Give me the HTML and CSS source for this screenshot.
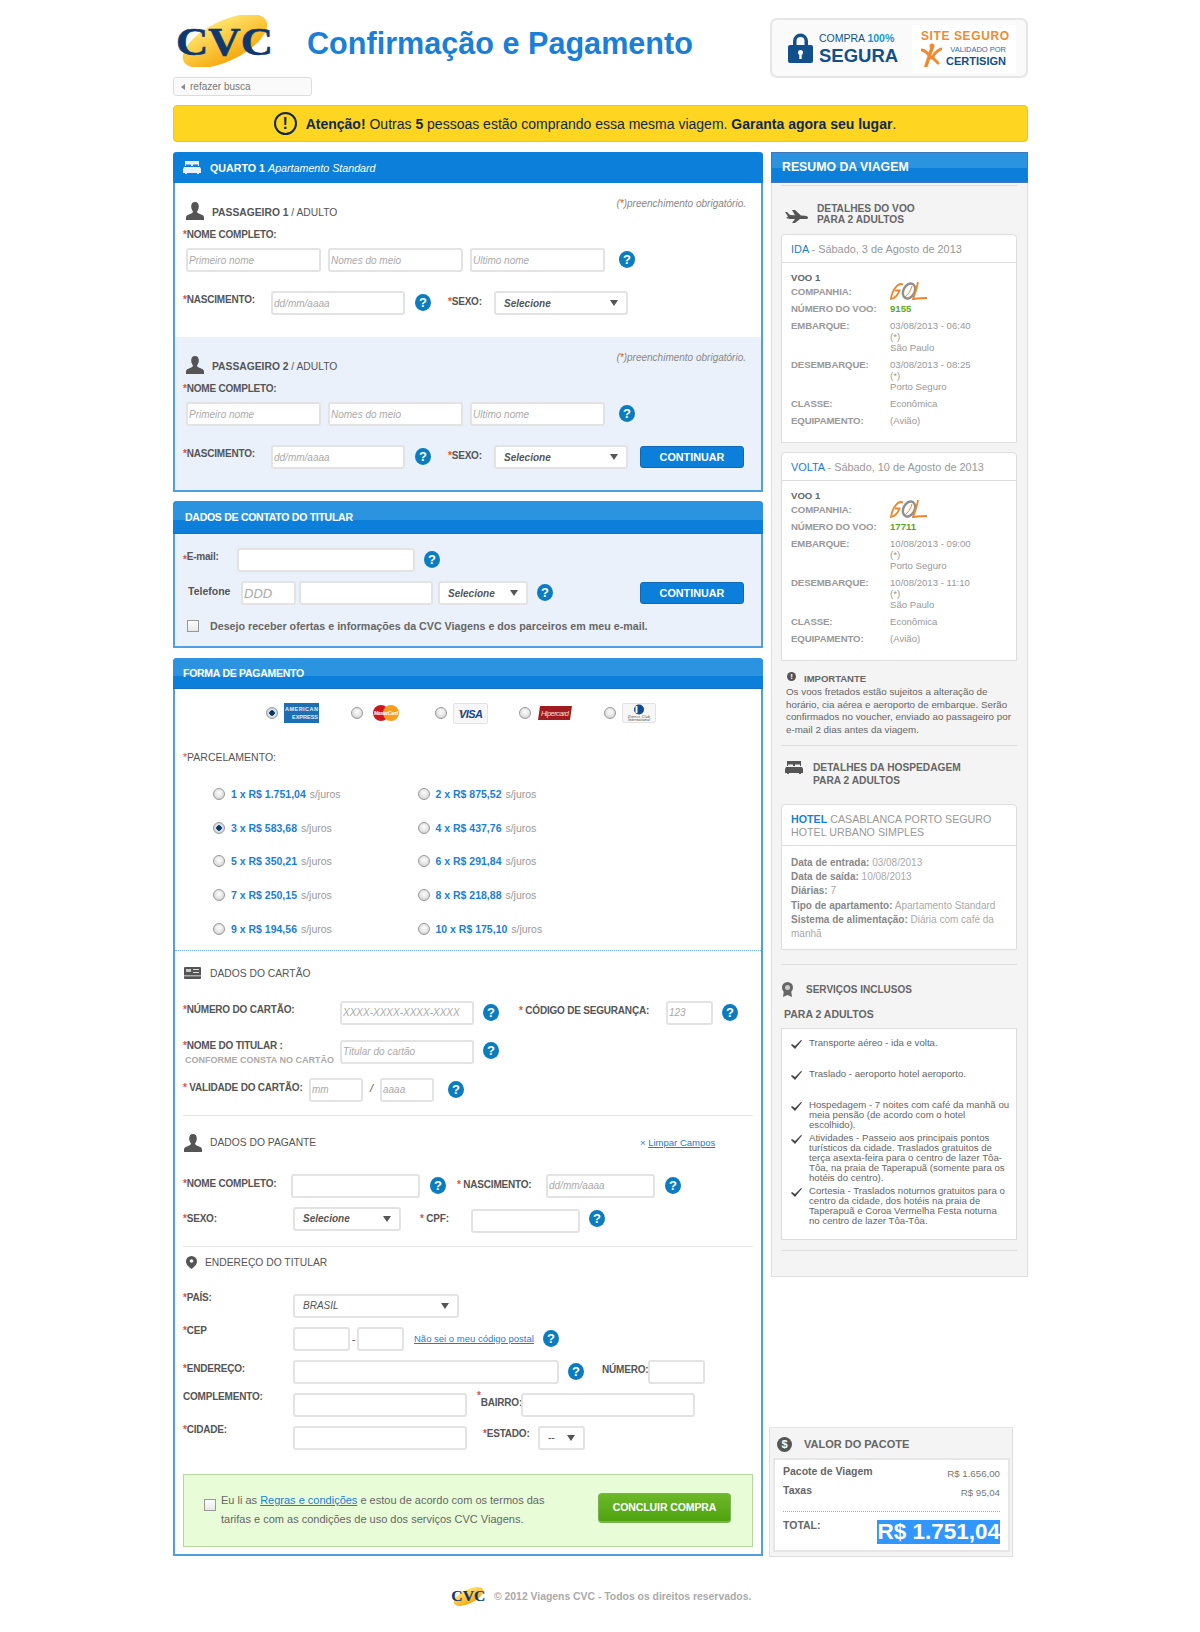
FILE: index.html
```html
<!DOCTYPE html>
<html lang="pt-BR">
<head>
    <meta charset="UTF-8">
    <title>Confirmação e Pagamento</title>
    <link rel="stylesheet" href="styles.css">
</head>
<body>
<svg class="defs" width="0" height="0">
    <defs>
        <linearGradient id="gold" x1="0" y1="0" x2="0" y2="1">
            <stop offset="0" stop-color="#ffe26a"/>
            <stop offset="1" stop-color="#f6ab12"/>
        </linearGradient>
        <symbol id="logo" viewBox="0 0 100 52">
            <ellipse cx="50" cy="26" rx="46" ry="20" transform="rotate(-26 50 26)" fill="url(#gold)"/>
            <text class="logo-text" x="1" y="40" font-size="41" textLength="97" lengthAdjust="spacingAndGlyphs">CVC</text>
        </symbol>
        <symbol id="person" viewBox="0 0 18 18">
            <path d="M9 0c2.700 0 3.800 2 3.800 4.500 0 2-.8 3.800-1.800 5 .1 1.300 1.200 1.800 3 2.600 2.200.9 4 1.600 4 3.400V18H0v-2.500c0-1.800 1.800-2.500 4-3.400 1.800-.8 2.900-1.300 3-2.600-1-1.200-1.800-3-1.800-5C5.200 2 6.300 0 9 0z"/>
        </symbol>
        <symbol id="bed" viewBox="0 0 18 13">
            <path d="M2 0h14v5h-1V3.500H10V5H8V3.500H3V5H2zM1 6h16l1 2v4h-2v1h-2v-1H4v1H2v-1H0V8z"/>
        </symbol>
        <symbol id="gol" viewBox="0 0 37 19">
            <path d="M13 2.500C8 0 2 8 1 17c4-1 7-4 8.500-8.500H5" fill="none" stroke="#f08428" stroke-width="1.800"/>
            <ellipse cx="19" cy="9" rx="5.500" ry="8" transform="rotate(28 19 9)" fill="none" stroke="#8f8f8f" stroke-width="2.400"/>
            <path d="M15 15c3-2 6-7 7-11" fill="none" stroke="#f08428" stroke-width="1"/>
            <path d="M28 0c-1 6-3 12-5 17 5-.5 10-1 14-1" fill="none" stroke="#f08428" stroke-width="1.800"/>
        </symbol>
    </defs>
</svg>

<div class="page">
    <header class="top">
        <div class="top-row">
            <svg class="logo"><use href="#logo"/></svg>
            <h1 class="title">Confirmação e Pagamento</h1>
            <div class="seal">
                <svg class="lock" viewBox="0 0 25 30">
                    <path d="M5 13V8a7.500 7.500 0 0 1 15 0v5h-3.500V8a4 4 0 0 0-8 0v5z" fill="#12508c"/>
                    <rect y="12" width="25" height="18" rx="2" fill="#12508c"/>
                    <circle cx="12.500" cy="19.500" r="2.500" fill="#fff"/>
                    <rect x="11.300" y="20" width="2.400" height="6" fill="#fff"/>
                </svg>
                <div class="seal-buy">
                    <div class="seal-small">COMPRA <b>100%</b></div>
                    <div class="seal-big">SEGURA</div>
                </div>
                <div class="seal-cert">
                    <div class="cert-top">SITE SEGURO</div>
                    <div class="cert-row">
                        <svg class="cert-star" viewBox="0 0 21 24" fill="none" stroke="#f08a32" stroke-linecap="round">
                            <circle cx="11" cy="3" r="2.500" fill="#f08a32" stroke="none"/>
                            <path d="M11 5L5 23" stroke-width="3.500"/>
                            <path d="M1 7c5 1 7 5 9 8" stroke-width="3"/>
                            <path d="M20 6c-4 2-7 5-8 8" stroke-width="3"/>
                            <path d="M11 14l6 6" stroke-width="3"/>
                        </svg>
                        <div class="cert-text">
                            <div class="cert-val">VALIDADO POR</div>
                            <div class="cert-name">CERTISIGN</div>
                        </div>
                    </div>
                </div>
            </div>
        </div>
        <a class="back"><span class="back-arrow"></span>refazer busca</a>
    </header>

    <div class="alert">
        <span class="alert-icon">!</span>
        <span><b>Atenção!</b> Outras <b>5</b> pessoas estão comprando essa mesma viagem. <b>Garanta agora seu lugar</b>.</span>
    </div>

    <div class="cols">
        <main class="main">
            <!-- quarto -->
            <section class="panel">
                <div class="panel-head flat">
                    <svg class="head-bed"><use href="#bed"/></svg>
                    <span><b>QUARTO 1</b> <em>Apartamento Standard</em></span>
                </div>

                <div class="pax">
                    <div class="pax-head">
                        <svg class="person"><use href="#person"/></svg>
                        <span class="sub-title"><b>PASSAGEIRO 1</b> / ADULTO</span>
                        <span class="req">(<span class="star">*</span>)preenchimento obrigatório.</span>
                    </div>
                    <div class="lbl lbl-name"><span class="star">*</span>NOME COMPLETO:</div>
                    <div class="row names">
                        <input class="in w135" placeholder="Primeiro nome">
                        <input class="in w135 ml7" placeholder="Nomes do meio">
                        <input class="in w135 ml7" placeholder="Último nome">
                        <span class="help ml14">?</span>
                    </div>
                    <div class="row birth">
                        <div class="lbl w88 mt2"><span class="star">*</span>NASCIMENTO:</div>
                        <input class="in w134" placeholder="dd/mm/aaaa">
                        <span class="help ml10">?</span>
                        <div class="lbl w46 ml17 mt4"><span class="star">*</span>SEXO:</div>
                        <div class="sel w134"><span>Selecione</span></div>
                    </div>
                </div>

                <div class="pax pax-alt">
                    <div class="pax-head">
                        <svg class="person"><use href="#person"/></svg>
                        <span class="sub-title"><b>PASSAGEIRO 2</b> / ADULTO</span>
                        <span class="req">(<span class="star">*</span>)preenchimento obrigatório.</span>
                    </div>
                    <div class="lbl lbl-name"><span class="star">*</span>NOME COMPLETO:</div>
                    <div class="row names">
                        <input class="in w135" placeholder="Primeiro nome">
                        <input class="in w135 ml7" placeholder="Nomes do meio">
                        <input class="in w135 ml7" placeholder="Último nome">
                        <span class="help ml14">?</span>
                    </div>
                    <div class="row birth">
                        <div class="lbl w88 mt2"><span class="star">*</span>NASCIMENTO:</div>
                        <input class="in w134" placeholder="dd/mm/aaaa">
                        <span class="help ml10">?</span>
                        <div class="lbl w46 ml17 mt4"><span class="star">*</span>SEXO:</div>
                        <div class="sel w134"><span>Selecione</span></div>
                        <button class="btn ml12">CONTINUAR</button>
                    </div>
                </div>
            </section>

            <!-- contato -->
            <section class="panel panel-contact">
                <div class="panel-head tall">DADOS DE CONTATO DO TITULAR</div>
                <div class="contact">
                    <div class="row">
                        <div class="lbl w54 mt2"><span class="star star-low">*</span>E-mail:</div>
                        <input class="in w178">
                        <span class="help ml9">?</span>
                    </div>
                    <div class="row phone">
                        <div class="lbl w58 mt3 phone-lbl">Telefone</div>
                        <input class="in w55 ddd" placeholder="DDD">
                        <input class="in w134 ml3">
                        <div class="sel w90 ml5"><span>Selecione</span></div>
                        <span class="help ml9">?</span>
                        <button class="btn phone-btn">CONTINUAR</button>
                    </div>
                    <div class="optin">
                        <span class="check"></span>
                        <span>Desejo receber ofertas e informações da CVC Viagens e dos parceiros em meu e-mail.</span>
                    </div>
                </div>
            </section>

            <!-- pagamento -->
            <section class="panel panel-pay">
                <div class="panel-head">FORMA DE PAGAMENTO</div>

                <div class="cards">
                    <span class="radio on"></span>
                    <svg class="card ml6" width="35" height="20" viewBox="0 0 35 20">
                        <rect width="35" height="20" fill="#1d6fb5"/>
                        <text class="amex" x="1" y="8" textLength="33">AMERICAN</text>
                        <text class="amex" x="8" y="16" textLength="26">EXPRESS</text>
                    </svg>
                    <span class="radio ml32"></span>
                    <svg class="card ml10" width="26" height="16" viewBox="0 0 26 16">
                        <circle cx="8" cy="8" r="8" fill="#d0171f"/>
                        <circle cx="18" cy="8" r="8" fill="#f99d1c"/>
                        <text class="mc" x="1" y="10" textLength="24">MasterCard</text>
                    </svg>
                    <span class="radio ml36"></span>
                    <svg class="card ml6" width="35" height="21" viewBox="0 0 35 21">
                        <rect x=".5" y=".5" width="34" height="20" rx="1.500" fill="#f7f7f7" stroke="#e2e2e2"/>
                        <path d="M5 7h4l1 4z" fill="#f2a81d"/>
                        <text class="visa" x="6" y="14.500" textLength="24">VISA</text>
                    </svg>
                    <span class="radio ml31"></span>
                    <svg class="card ml7" width="34" height="14" viewBox="0 0 34 14">
                        <path d="M2 0h32l-2 14H0z" fill="#a01c20"/>
                        <text class="hiper" x="3" y="10" textLength="28">Hipercard</text>
                    </svg>
                    <span class="radio ml32"></span>
                    <svg class="card ml6" width="34" height="20" viewBox="0 0 34 20">
                        <rect x=".5" y=".5" width="33" height="19" rx="1.500" fill="#f7f7f7" stroke="#e2e2e2"/>
                        <circle cx="17" cy="6.500" r="5" fill="#0f4a92"/>
                        <rect x="13.500" y="3" width="2" height="7" fill="#fff"/>
                        <text class="diners" x="6" y="14.500" textLength="22">Diners Club</text>
                        <text class="diners" x="6" y="18" textLength="22">International</text>
                    </svg>
                </div>

                <div class="lbl lbl-parc"><span class="star">*</span>PARCELAMENTO:</div>
                <div class="parc">
                    <div class="parc-item"><span class="radio"></span><b>1 x R$ 1.751,04</b> s/juros</div>
                    <div class="parc-item"><span class="radio"></span><b>2 x R$ 875,52</b> s/juros</div>
                    <div class="parc-item"><span class="radio on"></span><b>3 x R$ 583,68</b> s/juros</div>
                    <div class="parc-item"><span class="radio"></span><b>4 x R$ 437,76</b> s/juros</div>
                    <div class="parc-item"><span class="radio"></span><b>5 x R$ 350,21</b> s/juros</div>
                    <div class="parc-item"><span class="radio"></span><b>6 x R$ 291,84</b> s/juros</div>
                    <div class="parc-item"><span class="radio"></span><b>7 x R$ 250,15</b> s/juros</div>
                    <div class="parc-item"><span class="radio"></span><b>8 x R$ 218,88</b> s/juros</div>
                    <div class="parc-item"><span class="radio"></span><b>9 x R$ 194,56</b> s/juros</div>
                    <div class="parc-item"><span class="radio"></span><b>10 x R$ 175,10</b> s/juros</div>
                </div>
                <div class="dotted"></div>

                <div class="form">
                    <div class="sec-head card-head">
                        <svg class="sec-card" viewBox="0 0 17 12">
                            <rect width="17" height="12" rx="1" fill="#555"/>
                            <rect x="2" y="2" width="5" height="3" fill="#ccc"/>
                            <rect x="9" y="2" width="6" height="1" fill="#ddd"/>
                            <rect x="9" y="5" width="6" height="1" fill="#ddd"/>
                            <rect y="8" width="17" height="1.500" fill="#aaa"/>
                        </svg>
                        <span class="sub-title">DADOS DO CARTÃO</span>
                    </div>
                    <div class="row card-number">
                        <div class="lbl w157 mt2"><span class="star">*</span>NÚMERO DO CARTÃO:</div>
                        <input class="in w134" placeholder="XXXX-XXXX-XXXX-XXXX">
                        <span class="help ml9">?</span>
                        <div class="lbl w147 ml20 mt3"><span class="star">*</span>&nbsp;CÓDIGO DE SEGURANÇA:</div>
                        <input class="in w47" placeholder="123">
                        <span class="help ml9">?</span>
                    </div>
                    <div class="row card-holder">
                        <div class="w157 holder-lbl">
                            <div class="lbl"><span class="star">*</span>NOME DO TITULAR :</div>
                            <div class="lbl-note">CONFORME CONSTA NO CARTÃO</div>
                        </div>
                        <input class="in w134" placeholder="Titular do cartão">
                        <span class="help ml9 holder-help">?</span>
                    </div>
                    <div class="row card-valid">
                        <div class="lbl w126 mt3"><span class="star">*</span>&nbsp;VALIDADE DO CARTÃO:</div>
                        <input class="in w54" placeholder="mm">
                        <span class="slash">/</span>
                        <input class="in w54" placeholder="aaaa">
                        <span class="help ml14">?</span>
                    </div>
                    <div class="rule rule-a"></div>

                    <div class="sec-head payer-head">
                        <svg class="person"><use href="#person"/></svg>
                        <span class="sub-title">DADOS DO PAGANTE</span>
                        <span class="clear"><span class="clear-x">×</span> <a>Limpar Campos</a></span>
                    </div>
                    <div class="row payer-a">
                        <div class="lbl w108 mt3"><span class="star">*</span>NOME COMPLETO:</div>
                        <input class="in w129">
                        <span class="help ml10">?</span>
                        <div class="lbl w89 ml11 mt4"><span class="star">*</span>&nbsp;NASCIMENTO:</div>
                        <input class="in w109" placeholder="dd/mm/aaaa">
                        <span class="help ml10">?</span>
                    </div>
                    <div class="row payer-b">
                        <div class="lbl w110 mt5"><span class="star">*</span>SEXO:</div>
                        <div class="sel w108"><span>Selecione</span></div>
                        <div class="lbl w51 ml19 mt5"><span class="star">*</span>&nbsp;CPF:</div>
                        <input class="in w109 mt2">
                        <span class="help ml9 help-low">?</span>
                    </div>
                    <div class="rule rule-b"></div>

                    <div class="sec-head addr-head">
                        <svg class="pin" viewBox="0 0 11 13">
                            <path d="M5.500 0a5.500 5.500 0 0 1 5.500 5.500c0 3-3 5.500-5.500 7.500C3 11 0 8.500 0 5.500A5.500 5.500 0 0 1 5.500 0z" fill="#555"/>
                            <circle cx="5.500" cy="5" r="1.800" fill="#fff"/>
                        </svg>
                        <span class="sub-title">ENDEREÇO DO TITULAR</span>
                    </div>
                    <div class="row addr-first">
                        <div class="lbl w110 mtn3"><span class="star">*</span>PAÍS:</div>
                        <div class="sel w166 sel-caps"><span>BRASIL</span></div>
                    </div>
                    <div class="row addr-row">
                        <div class="lbl w110 mtn3"><span class="star">*</span>CEP</div>
                        <input class="in w57">
                        <span class="dash">-</span>
                        <input class="in w47">
                        <a class="cep-link">Não sei o meu código postal</a>
                        <span class="help ml9">?</span>
                    </div>
                    <div class="row addr-row">
                        <div class="lbl w110 mt2"><span class="star">*</span>ENDEREÇO:</div>
                        <input class="in w266">
                        <span class="help ml9">?</span>
                        <div class="lbl w46 ml18 mt3">NÚMERO:</div>
                        <input class="in w57">
                    </div>
                    <div class="row addr-row">
                        <div class="lbl w110 mtn3">COMPLEMENTO:</div>
                        <input class="in w174">
                        <div class="lbl w44 ml10 mt3 bairro"><span class="star star-up">*</span>BAIRRO:</div>
                        <input class="in w174">
                    </div>
                    <div class="row addr-row">
                        <div class="lbl w110 mtn3"><span class="star">*</span>CIDADE:</div>
                        <input class="in w174">
                        <div class="lbl w55 ml16 mt1"><span class="star">*</span>ESTADO:</div>
                        <div class="sel w47 sel-caps"><span>--</span></div>
                    </div>
                </div>

                <div class="finish">
                    <span class="check"></span>
                    <p class="terms">Eu li as <a>Regras e condições</a> e estou de acordo com os termos das<br>tarifas e com as condições de uso dos serviços CVC Viagens.</p>
                    <button class="btn-green">CONCLUIR COMPRA</button>
                </div>
            </section>
        </main>

        <aside class="side">
            <div class="side-panel">
                <div class="side-head">RESUMO DA VIAGEM</div>
                <div class="side-rule side-rule-top"></div>

                <div class="trip-head">
                    <svg class="plane" viewBox="0 0 23 13">
                        <path d="M0 2h2l3 3 5 .2L7 0h3l6 5.500 4 .2c2 .1 3 1 3 2s-1 1.300-3 1.300h-5l-5 4H7l3-4H5L1 8l2-1.500z" fill="#555"/>
                    </svg>
                    <div class="trip-title">DETALHES DO VOO<br>PARA 2 ADULTOS</div>
                </div>

                <div class="flight first">
                    <div class="flight-head"><b>IDA</b> - Sábado, 3 de Agosto de 2013</div>
                    <div class="flight-body">
                        <div class="flight-no">VOO 1</div>
                        <div class="fl-row"><b>COMPANHIA:</b><span><svg class="gol"><use href="#gol"/></svg></span></div>
                        <div class="fl-row"><b>NÚMERO DO VOO:</b><span class="fl-num">9155</span></div>
                        <div class="fl-row"><b>EMBARQUE:</b><span>03/08/2013 - 06:40<br>(*)<br>São Paulo</span></div>
                        <div class="fl-row"><b>DESEMBARQUE:</b><span>03/08/2013 - 08:25<br>(*)<br>Porto Seguro</span></div>
                        <div class="fl-row"><b>CLASSE:</b><span>Econômica</span></div>
                        <div class="fl-row"><b>EQUIPAMENTO:</b><span>(Avião)</span></div>
                    </div>
                </div>

                <div class="flight">
                    <div class="flight-head"><b>VOLTA</b> - Sábado, 10 de Agosto de 2013</div>
                    <div class="flight-body">
                        <div class="flight-no">VOO 1</div>
                        <div class="fl-row"><b>COMPANHIA:</b><span><svg class="gol"><use href="#gol"/></svg></span></div>
                        <div class="fl-row"><b>NÚMERO DO VOO:</b><span class="fl-num">17711</span></div>
                        <div class="fl-row"><b>EMBARQUE:</b><span>10/08/2013 - 09:00<br>(*)<br>Porto Seguro</span></div>
                        <div class="fl-row"><b>DESEMBARQUE:</b><span>10/08/2013 - 11:10<br>(*)<br>São Paulo</span></div>
                        <div class="fl-row"><b>CLASSE:</b><span>Econômica</span></div>
                        <div class="fl-row"><b>EQUIPAMENTO:</b><span>(Avião)</span></div>
                    </div>
                </div>

                <div class="notice-head"><span class="notice-icon">!</span>IMPORTANTE</div>
                <p class="notice">Os voos fretados estão sujeitos a alteração de<br>horário, cia aérea e aeroporto de embarque. Serão<br>confirmados no voucher, enviado ao passageiro por<br>e-mail 2 dias antes da viagem.</p>
                <div class="side-rule notice-rule"></div>

                <div class="hotel-head">
                    <svg class="hotel-bed"><use href="#bed"/></svg>
                    <div>DETALHES DA HOSPEDAGEM<br>PARA 2 ADULTOS</div>
                </div>
                <div class="hotel">
                    <div class="hotel-title"><b class="blue">HOTEL</b> CASABLANCA PORTO SEGURO<br>HOTEL URBANO SIMPLES</div>
                    <div class="hotel-body">
                        <b>Data de entrada:</b> 03/08/2013<br>
                        <b>Data de saída:</b> 10/08/2013<br>
                        <b>Diárias:</b> 7<br>
                        <b>Tipo de apartamento:</b> Apartamento Standard<br>
                        <b>Sistema de alimentação:</b> Diária com café da<br>
                        manhã
                    </div>
                </div>
                <div class="side-rule hotel-rule"></div>

                <div class="serv-head">
                    <svg class="award" viewBox="0 0 11 15">
                        <path d="M2 8l-1 7 4.500-2L10 15 9 8z" fill="#666"/>
                        <circle cx="5.500" cy="5.500" r="5.500" fill="#666"/>
                        <circle cx="5.500" cy="5.500" r="2.500" fill="#ccc"/>
                    </svg>
                    SERVIÇOS INCLUSOS
                </div>
                <div class="serv-sub">PARA 2 ADULTOS</div>
                <ul class="serv-list">
                    <li><svg class="tick" viewBox="0 0 11 9"><path d="M0 5l1-1 3 2 6-6 1 .5L4 9z"/></svg>Transporte aéreo - ida e volta.</li>
                    <li class="gap"><svg class="tick" viewBox="0 0 11 9"><path d="M0 5l1-1 3 2 6-6 1 .5L4 9z"/></svg>Traslado - aeroporto hotel aeroporto.</li>
                    <li class="gap"><svg class="tick" viewBox="0 0 11 9"><path d="M0 5l1-1 3 2 6-6 1 .5L4 9z"/></svg>Hospedagem - 7 noites com café da manhã ou<br>meia pensão (de acordo com o hotel<br>escolhido).</li>
                    <li class="near"><svg class="tick" viewBox="0 0 11 9"><path d="M0 5l1-1 3 2 6-6 1 .5L4 9z"/></svg>Atividades - Passeio aos principais pontos<br>turísticos da cidade. Traslados gratuitos de<br>terça asexta-feira para o centro de lazer Tôa-<br>Tôa, na praia de Taperapuã (somente para os<br>hotéis do centro).</li>
                    <li class="near"><svg class="tick" viewBox="0 0 11 9"><path d="M0 5l1-1 3 2 6-6 1 .5L4 9z"/></svg>Cortesia - Traslados noturnos gratuitos para o<br>centro da cidade, dos hotéis na praia de<br>Taperapuã e Coroa Vermelha Festa noturna<br>no centro de lazer Tôa-Tôa.</li>
                </ul>
                <div class="side-rule serv-rule"></div>
            </div>

            <div class="price">
                <div class="price-head"><span class="price-icon">$</span>VALOR DO PACOTE</div>
                <div class="price-box">
                    <div class="price-row"><b>Pacote de Viagem</b><span>R$ 1.656,00</span></div>
                    <div class="price-row"><b>Taxas</b><span>R$ 95,04</span></div>
                    <div class="price-total"><b>TOTAL:</b><span class="price-value">R$ 1.751,04</span></div>
                </div>
            </div>
        </aside>
    </div>

    <footer class="foot">
        <svg class="foot-logo"><use href="#logo"/></svg>
        <span>© 2012 Viagens CVC - Todos os direitos reservados.</span>
    </footer>
</div>
</body>
</html>
```

FILE: styles.css
```css
* {
    margin: 0;
    padding: 0;
    box-sizing: border-box;
}

body {
    font-family: "Liberation Sans", Arial, sans-serif;
    font-size: 11px;
    color: #555;
    background: #fff;
}

.defs {
    position: absolute;
}

.logo-text {
    font-family: "Liberation Serif", serif;
    font-weight: bold;
    fill: #10386f;
    stroke: #10386f;
    stroke-width: .6;
}

.page {
    width: 855px;
    margin-left: 173px;
}

/* topo */
.top {
    height: 105px;
    padding-top: 15px;
}

.top-row {
    display: flex;
    align-items: flex-start;
    height: 62px;
}

.logo {
    width: 100px;
    height: 52px;
    margin-left: 2px;
}

.title {
    margin: 10px 0 0 32px;
    font-size: 30.600px;
    line-height: 36px;
    font-weight: bold;
    color: #1a7fd8;
    white-space: nowrap;
}

.seal {
    display: flex;
    align-items: flex-start;
    width: 258px;
    height: 60px;
    margin: 3px 0 0 auto;
    background: #fafafa;
    border: 2px solid #e6e6e6;
    border-radius: 7px;
}

.lock {
    width: 25px;
    height: 30px;
    margin: 13px 0 0 16px;
}

.seal-buy {
    margin: 11px 0 0 6px;
    width: 93px;
    color: #12508c;
}

.seal-small {
    font-size: 10.500px;
    line-height: 14px;
}

.seal-small b {
    color: #1497d4;
}

.seal-big {
    font-size: 18.500px;
    line-height: 22px;
    font-weight: bold;
}

.seal-cert {
    width: 104px;
    height: 48px;
    margin-top: 5px;
    padding: 4px 10px 0 9px;
    background: #fff;
}

.cert-top {
    font-size: 12px;
    line-height: 14px;
    font-weight: bold;
    color: #f28a30;
    letter-spacing: .6px;
    white-space: nowrap;
}

.cert-row {
    display: flex;
    justify-content: space-between;
}

.cert-star {
    flex: none;
    width: 21px;
    height: 24px;
}

.cert-text {
    text-align: right;
}

.cert-val {
    margin-top: 2px;
    font-size: 7.500px;
    line-height: 9px;
    color: #2a6da8;
    white-space: nowrap;
}

.cert-name {
    margin-top: 1px;
    font-size: 11px;
    line-height: 12px;
    font-weight: bold;
    color: #12508c;
    white-space: nowrap;
}

.back {
    display: flex;
    align-items: center;
    width: 139px;
    height: 19px;
    padding-left: 7px;
    font-size: 10px;
    color: #777;
    background: #fafafa;
    border: 1px solid #ddd;
    border-radius: 3px;
}

.back-arrow {
    width: 0;
    height: 0;
    margin-right: 5px;
    border: 3px solid transparent;
    border-left: 0;
    border-right: 4px solid #888;
}

.alert {
    display: flex;
    align-items: center;
    justify-content: center;
    height: 37px;
    margin-bottom: 10px;
    padding-right: 31px;
    font-size: 14px;
    color: #10294a;
    background: #fed520;
    border: 1px solid #efc12a;
    border-radius: 4px;
}

.alert-icon {
    width: 23px;
    height: 23px;
    margin-right: 9px;
    font-size: 16px;
    line-height: 19px;
    font-weight: bold;
    text-align: center;
    border: 2px solid #10294a;
    border-radius: 50%;
}

.cols {
    display: flex;
    align-items: flex-start;
}

.main {
    width: 590px;
}

.side {
    width: 257px;
    margin-left: 8px;
}

/* paineis da esquerda */
.panel {
    background: #fff;
    border: 2px solid #4f9fe4;
    border-top: 0;
    border-radius: 4px 4px 0 0;
}

.panel-contact {
    margin-top: 9px;
}

.panel-pay {
    margin-top: 10px;
}

.panel-head {
    display: flex;
    align-items: center;
    height: 31px;
    margin: 0 -2px;
    padding-left: 10px;
    font-size: 10.500px;
    letter-spacing: -.27px;
    font-weight: bold;
    color: #fff;
    background: linear-gradient(#2b93e0 0, #2b93e0 60%, #0c7fdb 60%);
    border-bottom: 1px solid #1a6fc0;
    border-radius: 4px 4px 0 0;
}

.panel-head.flat {
    font-size: 10.700px;
    font-weight: normal;
    letter-spacing: 0;
    background: #0c7fdb;
    border-bottom: 0;
}

.panel-head.tall {
    height: 33px;
    padding-left: 12px;
}

.head-bed {
    width: 18px;
    height: 13px;
    margin-right: 9px;
    fill: #e8f2fb;
}

.star {
    color: #e8502c;
}

.star-up {
    position: relative;
    top: -7px;
}

.star-low {
    position: relative;
    top: 3px;
}

.row {
    display: flex;
    align-items: flex-start;
}

.lbl {
    font-size: 10px;
    letter-spacing: -.2px;
    line-height: 14px;
    font-weight: bold;
    color: #555;
    white-space: nowrap;
}

.in {
    height: 24px;
    padding: 0 1px;
    font-family: inherit;
    font-size: 10px;
    font-style: italic;
    background: #fff;
    border: 2px solid #e3e3e3;
    border-radius: 3px;
    outline: 0;
}

.in::placeholder {
    color: #aaa;
    opacity: 1;
}

.sel {
    position: relative;
    display: flex;
    align-items: center;
    height: 24px;
    padding-left: 8px;
    font-size: 10px;
    font-weight: bold;
    font-style: italic;
    color: #555;
    background: #fff;
    border: 2px solid #e3e3e3;
    border-radius: 3px;
}

.sel::after {
    content: "";
    position: absolute;
    top: 7px;
    right: 8px;
    border: 4px solid transparent;
    border-top: 6px solid #555;
    border-bottom: 0;
}

.help {
    flex: none;
    width: 16px;
    height: 17px;
    margin-top: 3px;
    font-size: 13px;
    line-height: 17px;
    font-weight: bold;
    text-align: center;
    color: #fff;
    background: #0b7cc0;
    border-radius: 50%;
}

.btn {
    flex: none;
    width: 104px;
    height: 22px;
    margin-top: 1px;
    font-family: inherit;
    font-size: 10.800px;
    font-weight: bold;
    color: #fff;
    background: #0c7fdb;
    border: 1px solid #1268b4;
    border-radius: 3px;
}

/* passageiros */
.pax {
    padding-bottom: 22px;
}

.pax-alt {
    padding-bottom: 21px;
    background: #eaf1fb;
}

.pax-head {
    display: flex;
    align-items: flex-start;
    height: 37px;
    padding: 19px 15px 0 11px;
}

.person {
    flex: none;
    width: 18px;
    height: 18px;
    fill: #555;
}

.sub-title {
    margin-left: 8px;
    font-size: 10.300px;
    line-height: 20px;
    color: #555;
    white-space: nowrap;
}

.pax-head .sub-title {
    line-height: 22px;
}

.req {
    margin: -5px 0 0 auto;
    font-size: 10px;
    line-height: 14px;
    font-style: italic;
    color: #888;
}

.lbl-name {
    margin: 8px 0 0 8px;
}

.names {
    margin: 6px 0 0 11px;
}

.birth {
    margin: 19px 0 0 8px;
}

/* contato */
.contact {
    padding: 14px 0 13px 8px;
    background: #eaf1fb;
}

.phone {
    margin-top: 9px;
}

.phone-lbl {
    padding-left: 5px;
    font-size: 10.500px;
    letter-spacing: 0;
}

.ddd {
    font-size: 13px;
}

.phone-btn {
    margin-left: 87px;
}

.optin {
    display: flex;
    align-items: center;
    height: 14px;
    margin: 14px 0 0 4px;
    font-size: 10.700px;
    font-weight: bold;
    color: #666;
}

.optin .check {
    margin-right: 11px;
}

.check {
    flex: none;
    width: 12px;
    height: 12px;
    background: linear-gradient(#fff, #e8e8e8);
    border: 1px solid #999;
}

/* pagamento */
.cards {
    display: flex;
    align-items: center;
    height: 22px;
    margin-top: 13px;
    padding-left: 91px;
}

.card {
    flex: none;
}

.radio {
    flex: none;
    width: 12px;
    height: 12px;
    background: radial-gradient(circle at 50% 40%, #fff 0, #ddd 65%, #bbb 100%);
    border: 1px solid #999;
    border-radius: 50%;
}

.radio.on {
    background: radial-gradient(circle, #0a3a66 0, #0a3a66 35%, #d8e4ee 42%, #cfcfcf 100%);
}

.amex {
    font-size: 5.500px;
    font-weight: bold;
    fill: #e8f2fb;
}

.mc {
    font-size: 5px;
    font-weight: bold;
    font-style: italic;
    fill: #fff;
}

.visa {
    font-size: 11px;
    font-weight: bold;
    font-style: italic;
    fill: #14468c;
}

.hiper {
    font-size: 7.500px;
    font-style: italic;
    fill: #f6dcdc;
}

.diners {
    font-size: 3.500px;
    font-style: italic;
    fill: #333;
}

.lbl-parc {
    margin: 26px 0 0 8px;
    font-weight: normal;
    font-size: 10.500px;
    letter-spacing: 0;
}

.parc {
    display: grid;
    grid-template-columns: 204.500px 1fr;
    grid-auto-rows: 33.750px;
    margin-top: 13px;
    padding-left: 38px;
}

.parc-item {
    display: flex;
    align-items: center;
    font-size: 10.500px;
    color: #999;
    white-space: pre;
}

.parc-item .radio {
    margin-right: 6px;
}

.parc-item b {
    margin-right: 1px;
    color: #1a7ed9;
}

.dotted {
    margin-top: 4px;
    border-top: 1px dotted #6db3e8;
}

.sec-head {
    display: flex;
    align-items: center;
    position: relative;
}

.card-head {
    height: 14px;
    margin: 15px 0 0 9px;
}

.card-head .sub-title {
    margin: 2px 0 0 9px;
}

.sec-card {
    width: 17px;
    height: 12px;
}

.card-number {
    margin: 21px 0 0 8px;
}

.card-holder {
    margin: 15px 0 0 8px;
}

.holder-lbl {
    margin: -1px 0 -3px;
}

.holder-help {
    margin-top: 2px;
}

.lbl-note {
    margin-left: 2px;
    font-size: 9px;
    line-height: 14px;
    font-weight: bold;
    color: #aaa;
    white-space: nowrap;
}

.card-valid {
    margin: 14px 0 0 8px;
}

.slash {
    width: 17px;
    line-height: 20px;
    text-align: center;
    font-style: italic;
}

.rule {
    height: 1px;
    margin: 0 8px;
    background: #e6e6e6;
}

.rule-a {
    margin-top: 13px;
}

.rule-b {
    margin-top: 13px;
}

.payer-head {
    height: 18px;
    margin: 18px 0 0 9px;
}

.clear {
    position: absolute;
    left: 456px;
    font-size: 9.500px;
    color: #1a7ed9;
    white-space: nowrap;
}

.clear a,
.cep-link,
.terms a {
    color: #1a7ed9;
    text-decoration: underline;
}

.payer-a {
    margin: 22px 0 0 8px;
}

.payer-b {
    margin: 9px 0 0 8px;
}

.help-low {
    margin-top: 3px;
}

.addr-head {
    height: 14px;
    margin: 9px 0 0 11px;
}

.addr-head .sub-title {
    margin-top: 1px;
}

.pin {
    width: 11px;
    height: 13px;
}

.addr-first {
    margin: 24px 0 0 8px;
}

.addr-row {
    margin: 9px 0 0 8px;
}

.dash {
    width: 7px;
    line-height: 24px;
    text-align: center;
}

.cep-link {
    margin: 5px 0 0 10px;
    font-size: 9.500px;
    line-height: 14px;
}

.sel-caps {
    font-weight: normal;
}

.finish {
    display: flex;
    align-items: center;
    height: 73px;
    margin: 24px 8px 7px;
    background: #e8fcd8;
    border: 1px solid #b5d89d;
}

.finish .check {
    margin: 0 0 10px 20px;
}

.terms {
    width: 366px;
    margin-left: 5px;
    line-height: 19px;
    color: #666;
    white-space: nowrap;
}

.btn-green {
    flex: none;
    width: 133px;
    height: 30px;
    margin: 0 0 5px 11px;
    font-family: inherit;
    font-size: 10.500px;
    letter-spacing: -.1px;
    font-weight: bold;
    color: #fff;
    background: linear-gradient(#6cb82a, #4fa30f);
    border: 1px solid #7ab351;
    border-bottom-width: 2px;
    border-radius: 4px;
}

/* lateral */
.side-panel {
    padding-bottom: 25px;
    background: #f4f4f4;
    border: 1px solid #ddd;
    border-top: 0;
}

.side-head {
    height: 31px;
    margin: 0 -1px;
    padding-left: 10px;
    font-size: 12.300px;
    line-height: 29px;
    font-weight: bold;
    color: #fff;
    background: linear-gradient(#2b93e0 0, #2b93e0 50%, #0c7fdb 50%);
    border: 1px solid #3f78bd;
}

.side-rule {
    width: 236px;
    height: 1px;
    margin-left: 9px;
    background: #ddd;
}

.side-rule-top {
    margin-top: 2px;
}

.trip-head {
    display: flex;
    align-items: flex-start;
    margin: 18px 0 0 13px;
    font-weight: bold;
    color: #666;
}

.plane {
    width: 23px;
    height: 13px;
    margin-top: 6px;
}

.trip-title {
    margin-left: 9px;
    font-size: 10.200px;
    line-height: 10.500px;
}

.flight {
    width: 236px;
    height: 209px;
    margin: 9px 0 0 9px;
    background: #fff;
    border: 1px solid #ddd;
    border-radius: 4px 4px 0 0;
}

.flight-head {
    height: 28px;
    padding-left: 9px;
    font-size: 10.900px;
    line-height: 28px;
    color: #999;
    border-bottom: 1px solid #ddd;
}

.flight-head b,
.blue {
    color: #1a7ed9;
}

.flight-head b {
    font-weight: normal;
}

.flight-body {
    padding: 9px 9px 0;
    font-size: 9.600px;
    line-height: 11px;
    color: #999;
}

.flight-no {
    margin-bottom: 3px;
    font-weight: bold;
    color: #666;
}

.fl-row {
    display: flex;
    margin-bottom: 6px;
}

.fl-row b {
    width: 99px;
    flex: none;
    letter-spacing: -.1px;
    white-space: nowrap;
}

.fl-num {
    font-weight: bold;
    color: #5aa81e;
}

.gol {
    display: block;
    width: 37px;
    height: 19px;
    margin: -4px 0;
}

.notice-head {
    display: flex;
    align-items: center;
    height: 12px;
    margin: 11px 0 0 15px;
    font-size: 9.500px;
    font-weight: bold;
    color: #666;
}

.notice-icon {
    width: 9px;
    height: 9px;
    margin: -4px 8px 0 0;
    font-size: 8px;
    line-height: 9px;
    text-align: center;
    color: #fff;
    background: #555;
    border-radius: 50%;
}

.notice {
    margin: 2px 0 0 14px;
    font-size: 9.800px;
    line-height: 12.500px;
    color: #666;
    white-space: nowrap;
}

.notice-rule {
    margin-top: 9px;
}

.hotel-head {
    display: flex;
    align-items: flex-start;
    margin: 15px 0 0 13px;
    font-size: 10.200px;
    line-height: 13px;
    font-weight: bold;
    color: #666;
}

.hotel-bed {
    width: 18px;
    height: 13px;
    margin-right: 10px;
    fill: #555;
}

.hotel {
    width: 236px;
    height: 146px;
    margin: 17px 0 0 9px;
    background: #fff;
    border: 1px solid #ddd;
    border-radius: 4px 4px 0 0;
}

.hotel-title {
    height: 41px;
    padding: 8px 0 0 9px;
    font-size: 10.700px;
    line-height: 13px;
    color: #999;
    border-bottom: 1px solid #ddd;
    white-space: nowrap;
}

.hotel-body {
    padding: 10px 0 0 9px;
    font-size: 10px;
    line-height: 14.200px;
    color: #aaa;
    white-space: nowrap;
}

.hotel-body b {
    color: #888;
}

.hotel-rule {
    margin-top: 14px;
}

.serv-head {
    display: flex;
    align-items: center;
    height: 15px;
    margin: 17px 0 0 10px;
    font-size: 10px;
    font-weight: bold;
    color: #666;
}

.award {
    width: 11px;
    height: 15px;
    margin-right: 13px;
}

.serv-sub {
    margin: 10px 0 0 12px;
    font-size: 10.500px;
    line-height: 14px;
    font-weight: bold;
    color: #666;
}

.serv-list {
    width: 236px;
    height: 212px;
    margin: 7px 0 0 9px;
    padding: 9px 0 0 9px;
    list-style: none;
    font-size: 9.650px;
    line-height: 10px;
    color: #666;
    background: #fff;
    border: 1px solid #ddd;
    white-space: nowrap;
}

.serv-list li {
    position: relative;
    padding-left: 18px;
}

.serv-list .gap {
    margin-top: 21px;
}

.serv-list .near {
    margin-top: 3px;
}

.tick {
    position: absolute;
    left: 0;
    top: 2px;
    width: 11px;
    height: 9px;
    fill: #444;
}

.serv-rule {
    margin-top: 10px;
}

/* valor */
.price {
    width: 244px;
    height: 130px;
    margin: 150px 0 0 -2px;
    background: #f4f4f4;
    border: 1px solid #ddd;
    border-top-color: #e6e6e6;
}

.price-head {
    display: flex;
    align-items: center;
    height: 30px;
    padding: 2px 0 0 7px;
    font-size: 11px;
    font-weight: bold;
    color: #666;
}

.price-icon {
    width: 15px;
    height: 15px;
    margin-right: 12px;
    font-size: 11px;
    line-height: 15px;
    text-align: center;
    color: #fff;
    background: #555;
    border-radius: 50%;
}

.price-box {
    width: 237px;
    height: 94px;
    margin-left: 3px;
    padding: 4px 8px 0;
    background: #fff;
    border: 2px solid #e6e6e6;
}

.price-row {
    display: flex;
    justify-content: space-between;
    height: 19px;
    line-height: 14px;
}

.price-row b {
    font-size: 10.500px;
    color: #666;
}

.price-row span {
    margin-top: 3px;
    font-size: 9.700px;
    color: #777;
}

.price-total {
    display: flex;
    justify-content: space-between;
    margin-top: 9px;
    padding-top: 8px;
    border-top: 1px dotted #aaa;
}

.price-total b {
    margin-top: -2px;
    font-size: 10.500px;
    line-height: 14px;
    color: #666;
}

.price-value {
    font-size: 22.500px;
    line-height: 24px;
    font-weight: bold;
    color: #fff;
    background: #3297fd;
    white-space: nowrap;
}

.foot {
    display: flex;
    align-items: center;
    height: 19px;
    margin: 30px 0 25px 278px;
    font-size: 10.400px;
    font-weight: bold;
    color: #aaa;
}

.foot-logo {
    width: 35px;
    height: 19px;
    margin-right: 8px;
}

/* medidas */
.w44 { width: 44px; flex: none; }
.w46 { width: 46px; flex: none; }
.w47 { width: 47px; flex: none; }
.w51 { width: 51px; flex: none; }
.w54 { width: 54px; flex: none; }
.w55 { width: 55px; flex: none; }
.w57 { width: 57px; flex: none; }
.w58 { width: 58px; flex: none; }
.w88 { width: 88px; flex: none; }
.w89 { width: 89px; flex: none; }
.w90 { width: 90px; flex: none; }
.w108 { width: 108px; flex: none; }
.w109 { width: 109px; flex: none; }
.w110 { width: 110px; flex: none; }
.w126 { width: 126px; flex: none; }
.w129 { width: 129px; flex: none; }
.w134 { width: 134px; flex: none; }
.w135 { width: 135px; flex: none; }
.w147 { width: 147px; flex: none; }
.w157 { width: 157px; flex: none; }
.w166 { width: 166px; flex: none; }
.w174 { width: 174px; flex: none; }
.w178 { width: 178px; flex: none; }
.w266 { width: 266px; flex: none; }

.ml3 { margin-left: 3px; }
.ml5 { margin-left: 5px; }
.ml6 { margin-left: 6px; }
.ml7 { margin-left: 7px; }
.ml9 { margin-left: 9px; }
.ml10 { margin-left: 10px; }
.ml11 { margin-left: 11px; }
.ml12 { margin-left: 12px; }
.ml14 { margin-left: 14px; }
.ml16 { margin-left: 16px; }
.ml17 { margin-left: 17px; }
.ml18 { margin-left: 18px; }
.ml19 { margin-left: 19px; }
.ml20 { margin-left: 20px; }
.ml31 { margin-left: 31px; }
.ml32 { margin-left: 32px; }
.ml36 { margin-left: 36px; }

.mt1 { margin-top: 1px; }
.mt2 { margin-top: 2px; }
.mt3 { margin-top: 3px; }
.mt4 { margin-top: 4px; }
.mt5 { margin-top: 5px; }
.mtn3 { margin-top: -3px; }
```
